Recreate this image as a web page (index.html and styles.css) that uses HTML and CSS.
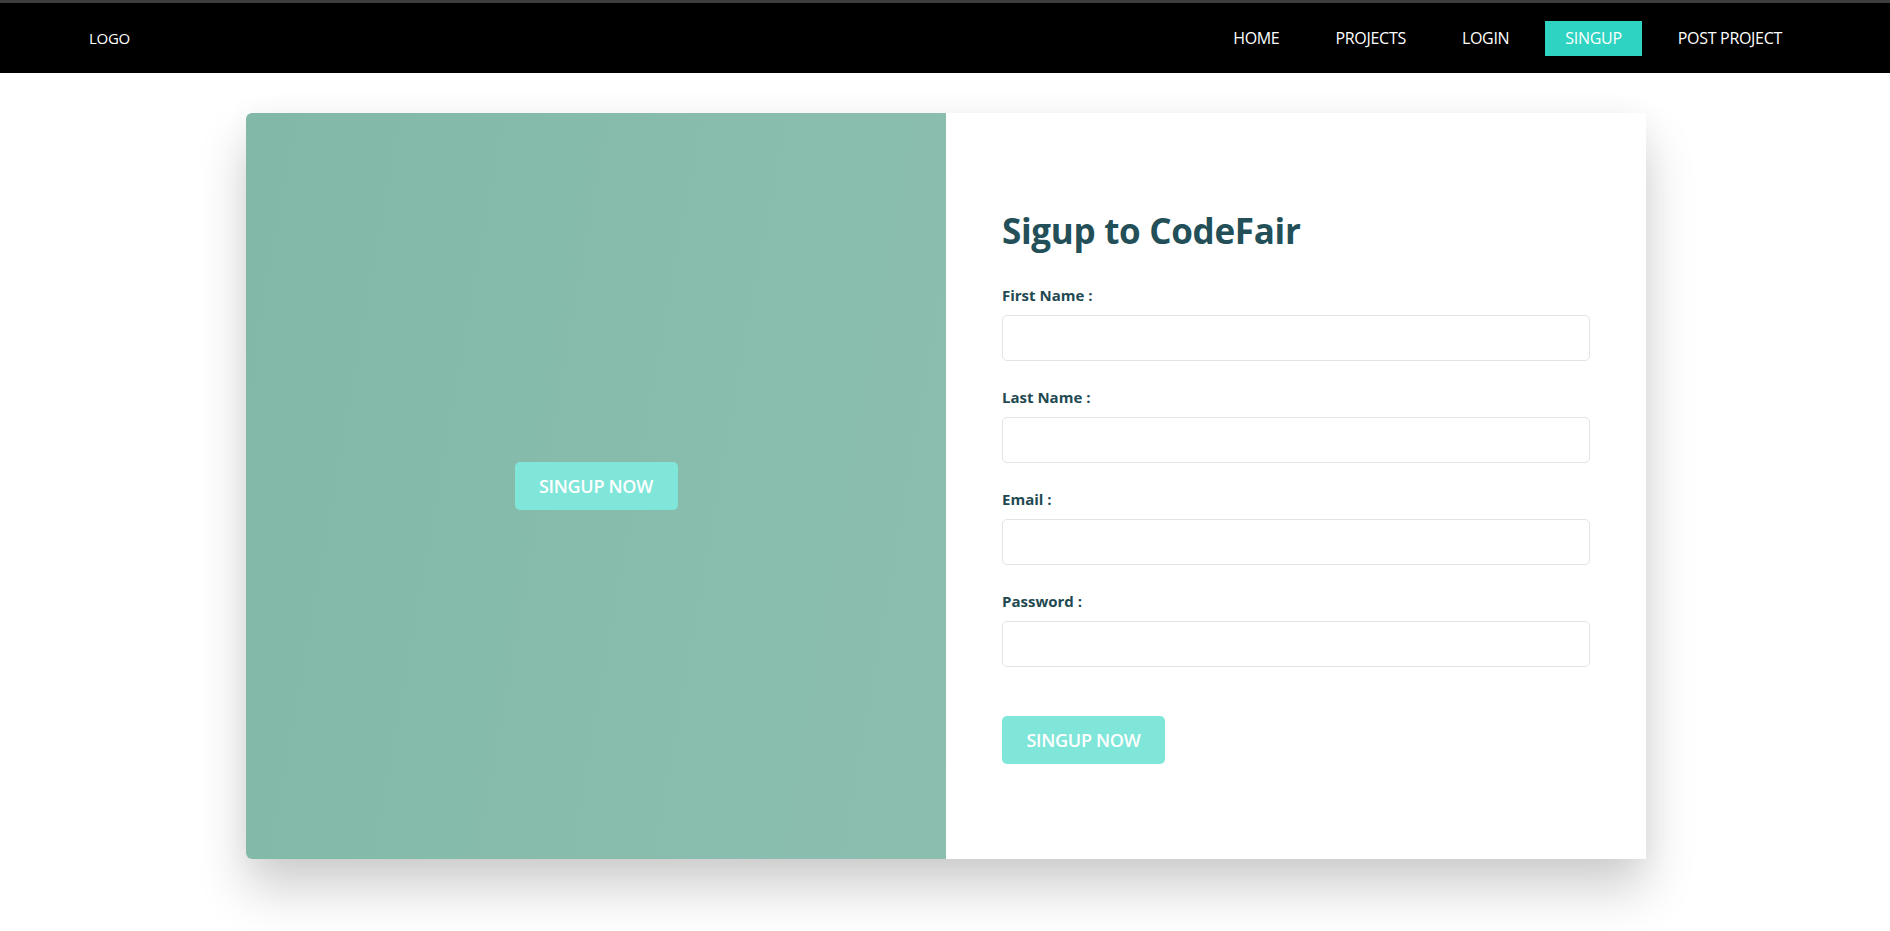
FILE: index.html
```html
<!DOCTYPE html>
<html lang="en">
<head>
<meta charset="utf-8">
<title>Signup - CodeFair</title>
<link rel="stylesheet" href="styles.css">
</head>
<body>
<header class="navbar">
  <div class="logo">LOGO</div>
  <nav class="nav-links">
    <a class="nav-link" href="#">HOME</a>
    <a class="nav-link" href="#">PROJECTS</a>
    <a class="nav-link" href="#">LOGIN</a>
    <a class="nav-link active" href="#">SINGUP</a>
    <a class="nav-link" href="#">POST PROJECT</a>
  </nav>
</header>
<main class="page">
  <section class="card">
    <div class="card-side">
      <button class="btn" type="button">SINGUP NOW</button>
    </div>
    <div class="card-form">
      <h1 class="title">Sigup to CodeFair</h1>
      <form class="form">
        <div class="field">
          <label class="label">First Name :</label>
          <input class="input" type="text">
        </div>
        <div class="field">
          <label class="label">Last Name :</label>
          <input class="input" type="text">
        </div>
        <div class="field">
          <label class="label">Email :</label>
          <input class="input" type="email">
        </div>
        <div class="field field-last">
          <label class="label">Password :</label>
          <input class="input" type="password">
        </div>
        <button class="btn btn-submit" type="button">SINGUP NOW</button>
      </form>
    </div>
  </section>
</main>
</body>
</html>
```
FILE: styles.css
```css
* { box-sizing: border-box; }
html, body { margin: 0; padding: 0; }
body {
  font-family: "Open Sans", "Noto Sans", "Liberation Sans", sans-serif;
  background: #ffffff;
  width: 1890px;
  height: 931px;
  overflow: hidden;
}
.navbar {
  height: 73px;
  background: #000;
  border-top: 3px solid #3d3d3d;
  display: flex;
  align-items: center;
  justify-content: space-between;
  padding: 0 88px 0 89px;
}
.logo {
  color: #fff;
  font-size: 15px;
  letter-spacing: -0.3px;
}
.nav-links {
  display: flex;
  align-items: center;
  gap: 16px;
}
.nav-link {
  color: #fff;
  text-decoration: none;
  font-size: 16px;
  letter-spacing: -0.3px;
  padding: 8px 20px;
  line-height: 19px;
}
.nav-link.active {
  background: #2ed3c1;
}
.page {
  display: flex;
  justify-content: center;
  padding: 40px 0 0 2px;
}
.card {
  width: 1400px;
  height: 746px;
  display: flex;
  border-radius: 6px 0 0 6px;
  box-shadow: 0 30px 50px rgba(0, 0, 0, 0.19), 0 0 30px rgba(0, 0, 0, 0.04);
  background: #fff;
}
.card-side {
  width: 700px;
  border-radius: 6px 0 0 6px;
  background: linear-gradient(100deg, #81b8a7 0%, #87bcad 50%, #8cbeb0 100%);
  display: flex;
  align-items: center;
  justify-content: center;
}
.card-form {
  width: 700px;
  padding: 0 56px;
  display: flex;
  flex-direction: column;
  justify-content: center;
}
.title {
  margin: 0 0 31px;
  font-size: 35px;
  font-weight: 700;
  color: #224f58;
  letter-spacing: -0.3px;
  line-height: 46px;
}
.form {
  display: flex;
  flex-direction: column;
}
.field {
  display: flex;
  flex-direction: column;
  margin-bottom: 26px;
}
.field-last { margin-bottom: 49px; }
.label {
  font-size: 15px;
  font-weight: 700;
  color: #1f4a52;
  line-height: 20px;
  margin-bottom: 10px;
}
.input {
  height: 46px;
  width: 100%;
  border: 1px solid #e3e3e3;
  border-radius: 5px;
  background: #fff;
  outline: none;
}
.btn {
  border: none;
  border-radius: 5px;
  background: #80e6d9;
  color: #fff;
  font-family: inherit;
  font-weight: 600;
  font-size: 18px;
  letter-spacing: -0.3px;
  height: 48px;
  width: 163px;
  padding: 0;
  cursor: pointer;
}
.btn-submit {
  align-self: flex-start;
}
```
